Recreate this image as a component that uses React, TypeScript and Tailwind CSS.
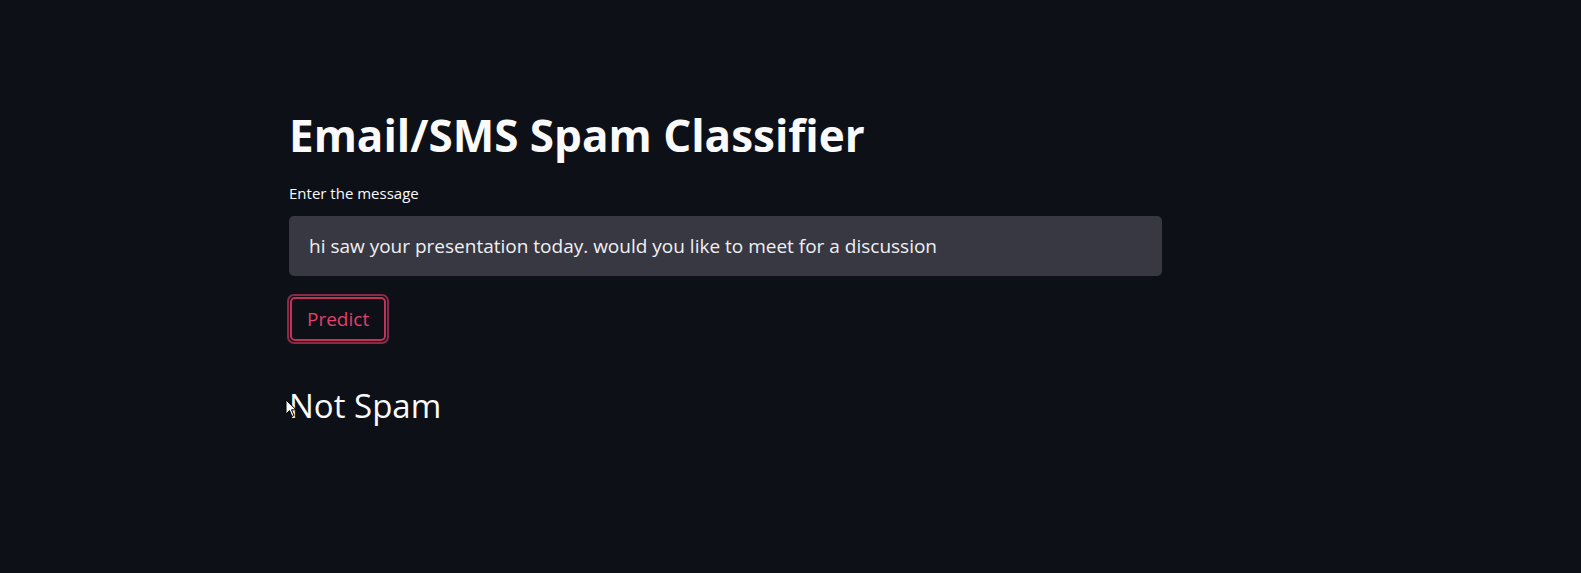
import { useState } from "react"

export default function App() {
    const [message, setMessage] = useState("hi saw your presentation today. would you like to meet for a discussion")

    return (<>
        <main className="min-h-screen w-full bg-[#0e1018] text-white" style={{ fontFamily: '"Open Sans", "Liberation Sans", sans-serif' }}>
            <section className="pl-[289px] pt-[105px] w-[1162px]">
                <h1 className="text-[44px] font-bold leading-[60px] text-[#fafafa]">Email/SMS Spam Classifier</h1>

                <label className="block mt-[18px] text-[15px] leading-[20px] text-[#fafafa]">Enter the message</label>
                <div className="mt-[13px] h-[60px] rounded-[5px] bg-[#383843] px-[20px] flex items-center">
                    <input
                        className="w-full bg-transparent outline-none text-[19px] text-[#f0f0f2]"
                        value={message}
                        onChange={(e) => setMessage(e.target.value)}
                    />
                </div>

                <div className="mt-[18px] ml-[-2px] inline-block rounded-[7px] border-2 border-[#8a2a47] p-[1px]">
                    <button className="h-[44px] px-[15px] rounded-[5px] border-2 border-[#c23258] bg-[#0e1018] text-[19px] text-[#e0406a]">Predict</button>
                </div>

                <div className="relative mt-[40px]">
                    <h3 className="text-[33px] leading-[44px] text-[#fafafa]">Not Spam</h3>
                    <svg className="absolute left-[-4px] top-[15px]" width="12" height="19" viewBox="0 0 12 19">
                        <path d="M1 1 L1 15 L4.5 11.5 L7 17.5 L9 16.5 L6.5 10.8 L11 10.8 Z" fill="#fff" stroke="#000" strokeWidth="1" />
                    </svg>
                </div>
            </section>
        </main>
    </>)
}
